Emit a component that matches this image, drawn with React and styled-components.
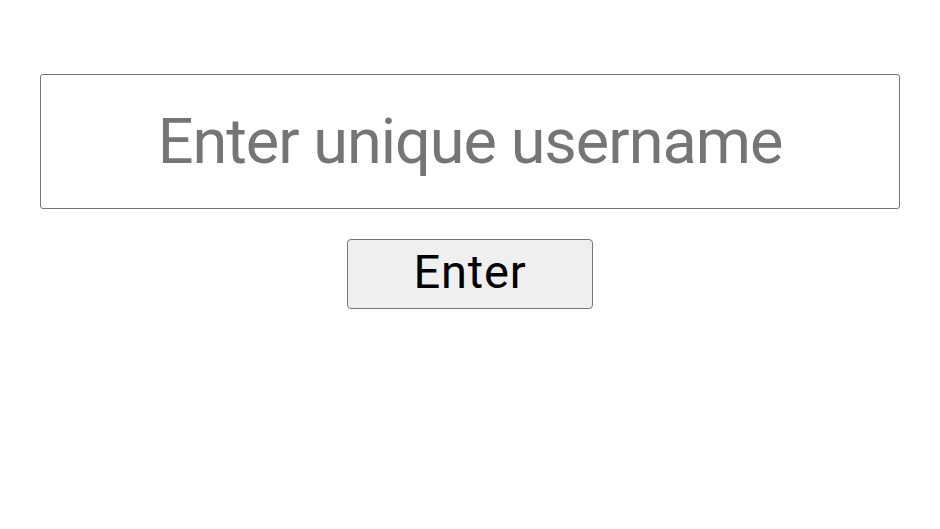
import React from 'react'
import styled, { createGlobalStyle } from 'styled-components'

const Global = createGlobalStyle`
  body {
    margin: 0;
    background: #fff;
    font-family: Roboto, "Noto Sans", sans-serif;
  }
`

const Page = styled.div`
  display: flex;
  flex-direction: column;
  align-items: center;
  padding: 74px 40px 0;
`

const UsernameInput = styled.input`
  box-sizing: border-box;
  width: 100%;
  height: 135px;
  border: 1px solid #767676;
  border-radius: 3px;
  font-family: Roboto, sans-serif;
  font-size: 63px;
  letter-spacing: -1px;
  text-align: center;
  color: #000;
  padding: 0;
  outline: none;

  &::placeholder {
    color: #757575;
  }
`

const EnterButton = styled.button`
  box-sizing: border-box;
  margin-top: 30px;
  width: 246px;
  height: 70px;
  border: 1px solid #767676;
  border-radius: 4px;
  background: #efefef;
  color: #000;
  font-family: Roboto, sans-serif;
  font-size: 47px;
  letter-spacing: 0.8px;
  padding: 0 0 5px;
`

function App () {
  return (
    <>
      <Global />
      <Page>
        <UsernameInput placeholder='Enter unique username' />
        <EnterButton type='button'>Enter</EnterButton>
      </Page>
    </>
  )
}

export default App
